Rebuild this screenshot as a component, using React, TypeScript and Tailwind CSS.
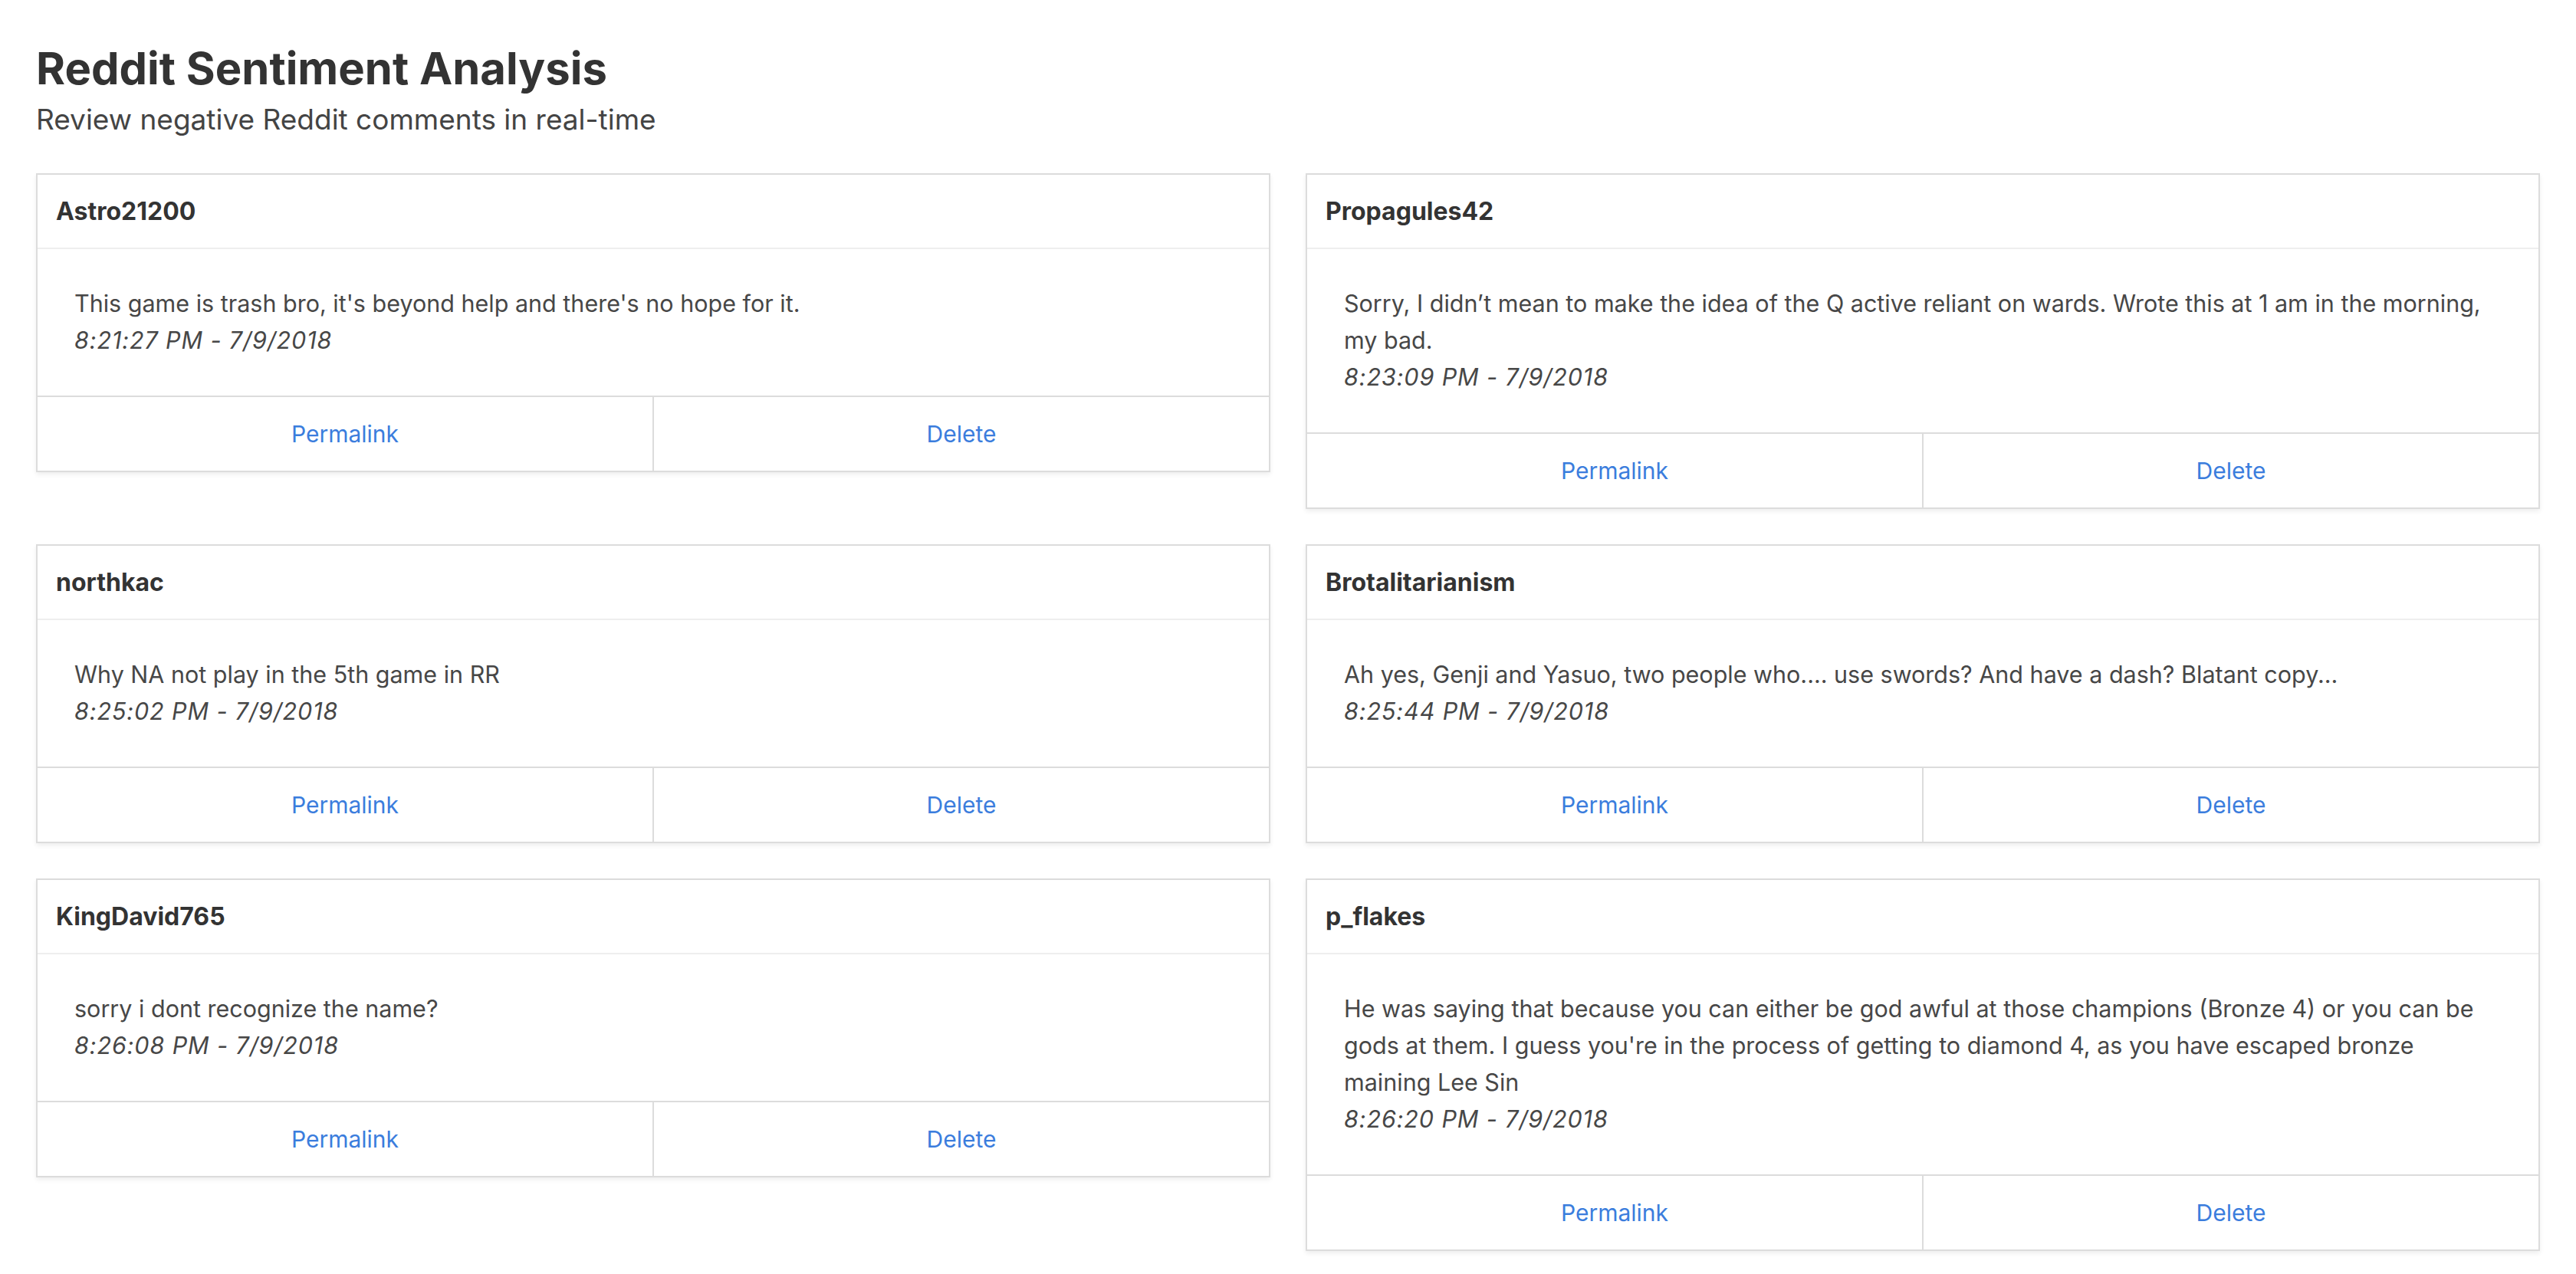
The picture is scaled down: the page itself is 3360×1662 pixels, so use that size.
const comments = [
  {
    author: "Astro21200",
    body: "This game is trash bro, it's beyond help and there's no hope for it.",
    time: "8:21:27 PM - 7/9/2018",
  },
  {
    author: "Propagules42",
    body: "Sorry, I didn’t mean to make the idea of the Q active reliant on wards. Wrote this at 1 am in the morning, my bad.",
    time: "8:23:09 PM - 7/9/2018",
  },
  {
    author: "northkac",
    body: "Why NA not play in the 5th game in RR",
    time: "8:25:02 PM - 7/9/2018",
  },
  {
    author: "Brotalitarianism",
    body: "Ah yes, Genji and Yasuo, two people who.... use swords? And have a dash? Blatant copy...",
    time: "8:25:44 PM - 7/9/2018",
  },
  {
    author: "KingDavid765",
    body: "sorry i dont recognize the name?",
    time: "8:26:08 PM - 7/9/2018",
  },
  {
    author: "p_flakes",
    body: "He was saying that because you can either be god awful at those champions (Bronze 4) or you can be gods at them. I guess you're in the process of getting to diamond 4, as you have escaped bronze maining Lee Sin",
    time: "8:26:20 PM - 7/9/2018",
  },
];

function CommentCard({ author, body, time }: { author: string; body: string; time: string }) {
  return (
    <div className="border-2 border-[#dcdcdc] bg-white shadow-[0_3px_6px_rgba(0,0,0,0.07)]">
      <div className="px-[24px] py-[25px] border-b-2 border-[#eeeeee] text-[32px] leading-[45px] font-bold text-[#333333]">
        {author}
      </div>
      <div className="px-[48px] pt-[47px] pb-[48px] text-[30.5px] leading-[48px] text-[#474747]">
        <div>{body}</div>
        <div className="italic tracking-[0.9px]">{time}</div>
      </div>
      <div className="flex border-t-2 border-[#dcdcdc] text-[30px] text-[#3b7ddd]">
        <button className="flex-1 h-[96px] text-center">Permalink</button>
        <div className="w-[2px] bg-[#dcdcdc]" />
        <button className="flex-1 h-[96px] text-center">Delete</button>
      </div>
    </div>
  );
}

export default function App() {
  return (
    <div className="min-h-screen bg-white px-[47px] pt-[55px] pb-[40px] font-['Inter',sans-serif]">
      <h1 className="text-[58px] leading-[68px] font-bold text-[#333333]">Reddit Sentiment Analysis</h1>
      <p className="mt-[11px] text-[37px] leading-[44px] text-[#444444]">
        Review negative Reddit comments in real-time
      </p>
      <div className="mt-[48px] grid grid-cols-2 gap-[46px] items-start">
        {comments.map((c) => (
          <CommentCard key={c.author} {...c} />
        ))}
      </div>
    </div>
  );
}
